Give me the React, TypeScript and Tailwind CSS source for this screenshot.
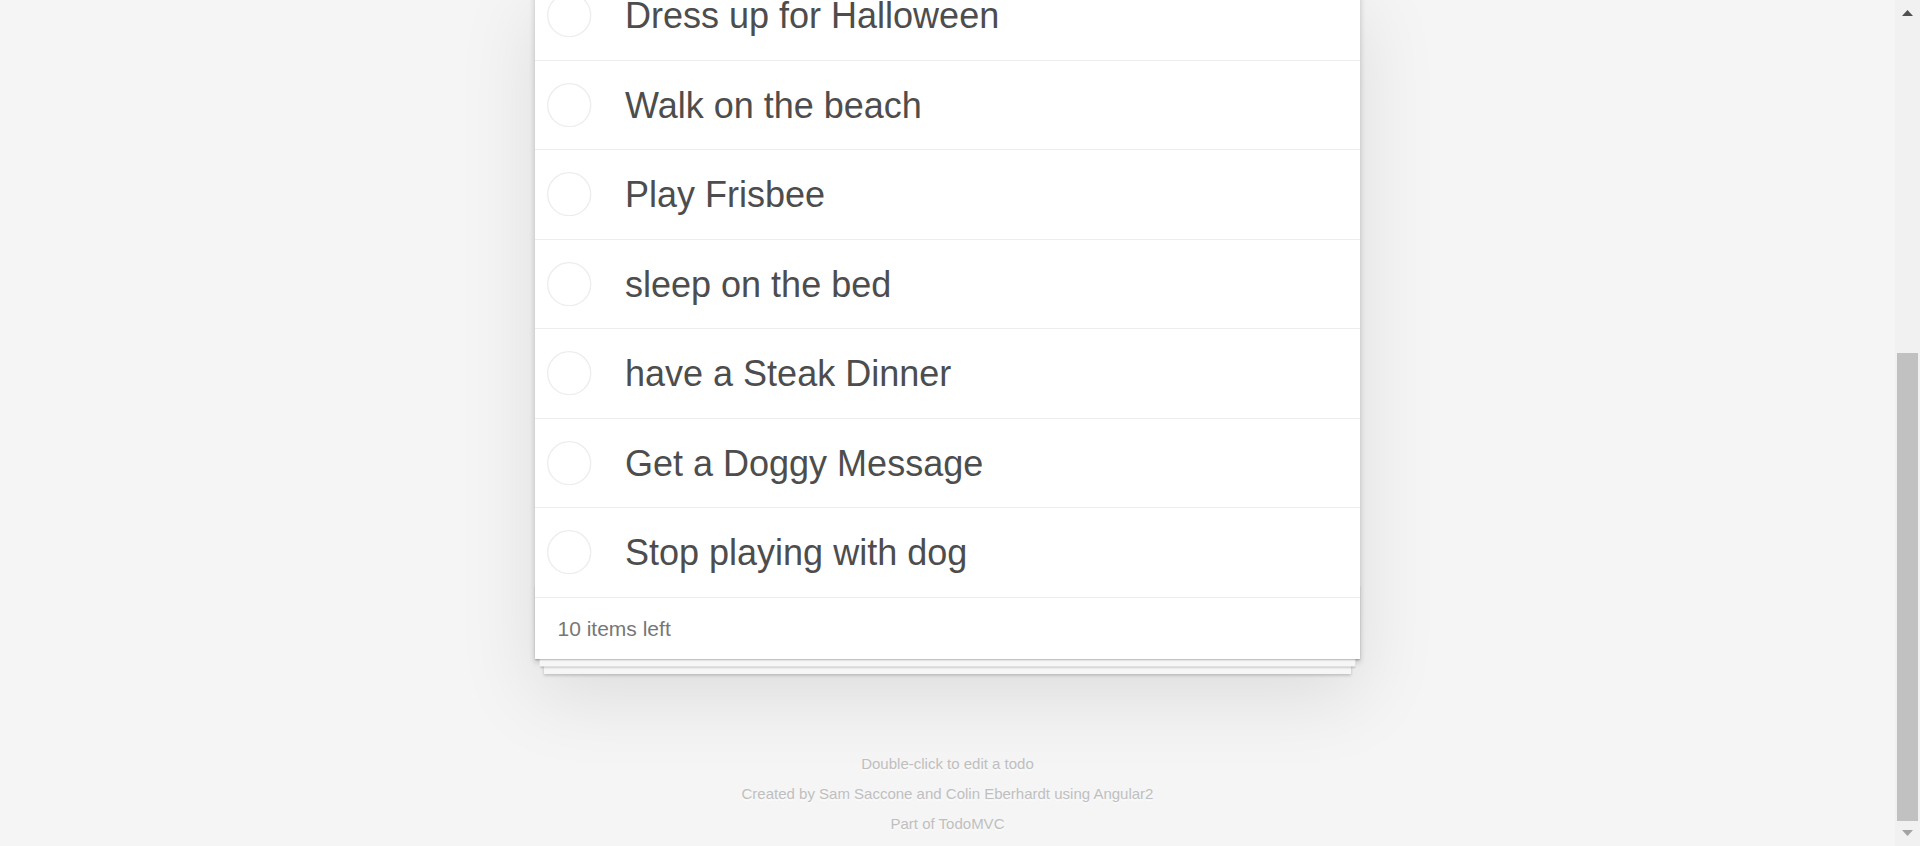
import React from 'react';

const todos = [
  'Dress up for Halloween',
  'Walk on the beach',
  'Play Frisbee',
  'sleep on the bed',
  'have a Steak Dinner',
  'Get a Doggy Message',
  'Stop playing with dog',
];

const ToggleCircle: React.FC = () => (
  <svg width="44.4" height="44.4" viewBox="0 0 44.4 44.4" className="shrink-0">
    <circle cx="22.2" cy="22.2" r="21.5" fill="none" stroke="#ededed" strokeWidth="1.33" />
  </svg>
);

const Scrollbar: React.FC = () => (
  <div className="w-[25px] h-full flex flex-col bg-[#f1f1f1] shrink-0">
    <div className="h-[25px] flex items-start justify-center pt-[10px]">
      <svg width="11" height="6" viewBox="0 0 11 6">
        <polygon points="5.5,0 11,6 0,6" fill="#505050" />
      </svg>
    </div>
    <div className="flex-1" />
    <div className="h-[468px] mx-[2px] bg-[#c1c1c1]" />
    <div className="h-[25px] flex items-start justify-center pt-[9px]">
      <svg width="11" height="6" viewBox="0 0 11 6">
        <polygon points="0,0 11,0 5.5,6" fill="#a3a3a3" />
      </svg>
    </div>
  </div>
);

const App: React.FC = () => {
  return (
    <div className="h-[846px] w-full flex overflow-hidden bg-[#f5f5f5] font-['Liberation_Sans',Arial,sans-serif]">
      <div className="flex-1 flex flex-col items-center overflow-hidden">
        {/* Todo card */}
        <section className="w-[825px] -mt-[29px] bg-white relative shadow-[0_3px_6px_0_rgba(0,0,0,0.2),0_37.5px_75px_0_rgba(0,0,0,0.1)]">
          <ul>
            {todos.map((todo) => (
              <li
                key={todo}
                className="h-[89.5px] flex items-center border-b border-[#ededed]"
              >
                <div className="w-[90px] shrink-0 flex items-center pl-[12.3px]">
                  <ToggleCircle />
                </div>
                <label className="mt-[1.5px] text-[36px] leading-[43.2px] text-[#4d4d4d]">{todo}</label>
              </li>
            ))}
          </ul>

          <footer className="relative h-[61px] px-[22.5px] flex items-center text-[21px] leading-[30px] text-[#777777]">
            <div className="absolute left-0 right-0 bottom-0 h-[75px] overflow-hidden pointer-events-none shadow-[0_1.5px_1.5px_rgba(0,0,0,0.2),0_12px_0_-4.5px_#f6f6f6,0_13.5px_1.5px_-4.5px_rgba(0,0,0,0.2),0_24px_0_-9px_#f6f6f6,0_25.5px_3px_-9px_rgba(0,0,0,0.2)]" />
            <span className="relative mt-[1.5px]">10 items left</span>
          </footer>
        </section>

        {/* Info */}
        <div className="mt-[97px] text-center text-[15px] leading-[15px] text-[#bfbfbf] [text-shadow:0_1.5px_0_rgba(255,255,255,0.5)]">
          <p>Double-click to edit a todo</p>
          <p className="mt-[15px]">Created by Sam Saccone and Colin Eberhardt using Angular2</p>
          <p className="mt-[15px]">Part of TodoMVC</p>
        </div>
      </div>
      <Scrollbar />
    </div>
  );
};

export default App;
